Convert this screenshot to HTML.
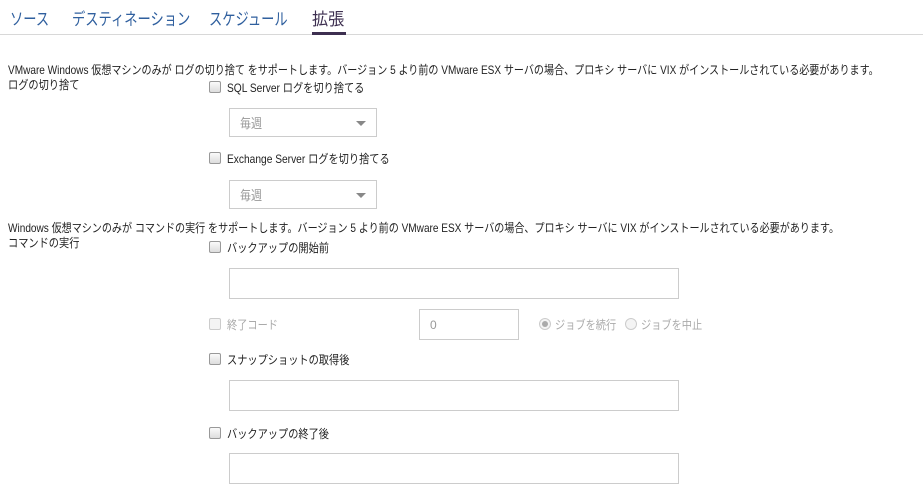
<!DOCTYPE html>
<html><head><meta charset="utf-8"><style>
*{margin:0;padding:0;box-sizing:border-box}
body{width:923px;height:494px;background:#fff;font-family:"Liberation Sans","Noto Sans CJK JP",sans-serif;font-size:12px;color:#222;position:relative;overflow:hidden}
.a{position:absolute;white-space:nowrap}
.t{transform:scaleX(.85);transform-origin:0 0}
.tab{position:absolute;top:5px;font-size:17px;color:#2f5f9e;white-space:nowrap;transform:scaleX(.78);transform-origin:0 0}
.cb{position:absolute;width:12px;height:12px;border:1px solid #999;border-radius:2px;background:linear-gradient(#fafafa,#ddd)}
.cb.d{border-color:#ccc;background:#f4f4f4}
.sel{position:absolute;width:148px;height:29px;border:1px solid #ccc;color:#999;font-size:13px}
.sel span{position:absolute;left:10px;top:4px;transform:scaleX(.85);transform-origin:0 0}
.sel:after{content:"";position:absolute;right:10px;top:12px;border-left:5px solid transparent;border-right:5px solid transparent;border-top:5px solid #888}
.inp{position:absolute;width:450px;height:31px;border:1px solid #ccc}
.rd{position:absolute;width:12px;height:12px;border:1px solid #ccc;border-radius:50%;background:#f4f4f4}
</style></head><body>
<div class="tab" style="left:10px">ソース</div>
<div class="tab" style="left:72px">デスティネーション</div>
<div class="tab" style="left:209px">スケジュール</div>
<div class="tab" style="left:312px;color:#3d2f50;transform:scaleX(.95)">拡張</div>
<div class="a" style="left:0;top:34px;width:923px;height:1px;background:#d8d8d8"></div>
<div class="a" style="left:312px;top:32px;width:34px;height:3px;background:#3d2f50"></div>

<div class="a t" style="left:8px;top:61px;transform:scaleX(.838)">VMware Windows 仮想マシンのみが ログの切り捨て をサポートします。バージョン 5 より前の VMware ESX サーバの場合、プロキシ サーバに VIX がインストールされている必要があります。</div>
<div class="a t" style="left:8px;top:76px">ログの切り捨て</div>
<div class="cb" style="left:209px;top:81px"></div>
<div class="a t" style="left:227px;top:79px">SQL Server ログを切り捨てる</div>
<div class="sel" style="left:229px;top:108px"><span>毎週</span></div>
<div class="cb" style="left:209px;top:152px"></div>
<div class="a t" style="left:227px;top:150px">Exchange Server ログを切り捨てる</div>
<div class="sel" style="left:229px;top:180px"><span>毎週</span></div>

<div class="a t" style="left:8px;top:219px;transform:scaleX(.838)">Windows 仮想マシンのみが コマンドの実行 をサポートします。バージョン 5 より前の VMware ESX サーバの場合、プロキシ サーバに VIX がインストールされている必要があります。</div>
<div class="a t" style="left:8px;top:234px">コマンドの実行</div>
<div class="cb" style="left:209px;top:241px"></div>
<div class="a t" style="left:227px;top:239px">バックアップの開始前</div>
<div class="inp" style="left:229px;top:268px"></div>
<div class="cb d" style="left:209px;top:318px"></div>
<div class="a t" style="left:227px;top:316px;color:#aaa">終了コード</div>
<div class="a" style="left:419px;top:309px;width:100px;height:31px;border:1px solid #ccc;color:#999;padding:8px 0 0 10px">0</div>
<div class="rd" style="left:539px;top:318px"></div>
<div class="a" style="left:542px;top:321px;width:6px;height:6px;border-radius:50%;background:#aaa"></div>
<div class="a t" style="left:555px;top:316px;color:#aaa">ジョブを続行</div>
<div class="rd" style="left:625px;top:318px"></div>
<div class="a t" style="left:641px;top:316px;color:#aaa">ジョブを中止</div>
<div class="cb" style="left:209px;top:353px"></div>
<div class="a t" style="left:227px;top:351px">スナップショットの取得後</div>
<div class="inp" style="left:229px;top:380px"></div>
<div class="cb" style="left:209px;top:427px"></div>
<div class="a t" style="left:227px;top:425px">バックアップの終了後</div>
<div class="inp" style="left:229px;top:453px"></div>
</body></html>
